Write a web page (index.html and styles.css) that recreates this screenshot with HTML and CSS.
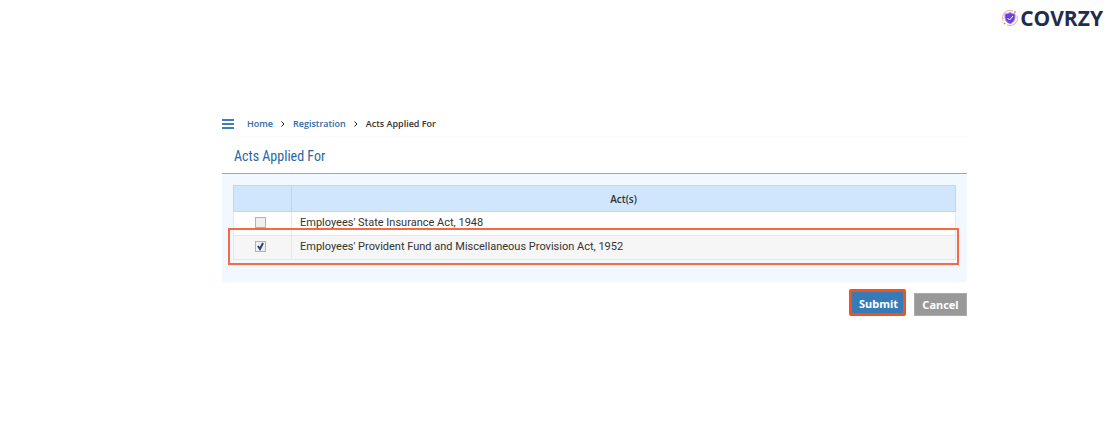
FILE: index.html
```
<!DOCTYPE html>
<html lang="en">
<head>
  <meta charset="UTF-8" />
  <meta name="viewport" content="width=device-width, initial-scale=1.0" />
  <title>Acts Applied For</title>
  <link rel="stylesheet" href="styles.css">
</head>
<body>
  <header class="brand">
    <svg class="brand-icon" viewBox="0 0 36 36" aria-hidden="true">
      <g fill="none" stroke="#f6a58c" stroke-width="2">
        <path d="M4 23A15 15 0 0 1 24 4" />
        <path d="M32 13A15 15 0 0 1 12 32" />
        <path d="M3 14A16 16 0 0 1 13 3M33 22A16 16 0 0 1 23 33" stroke="#f9c9ba" />
      </g>
      <circle cx="28" cy="6" r="2" fill="#f58466" />
      <circle cx="7" cy="29" r="2" fill="#f58466" />
      <path d="M18 7Q23 10 28 10V18Q28 25 18 30Q8 25 8 18V10Q13 10 18 7Z" fill="#6b3fe0" stroke="#a58af0" stroke-width="2" />
      <path d="M13 18L17 22L24 14" fill="none" stroke="#fff" stroke-width="2" />
    </svg>
    <span class="brand-name">COVRZY</span>
  </header>

  <main class="page">
    <nav class="breadcrumb" aria-label="Breadcrumb">
      <button class="menu" type="button" aria-label="Menu">
        <svg viewBox="0 0 12 10" aria-hidden="true"><path d="M0 1H12M0 5H12M0 9H12" stroke="#3f7fbd" stroke-width="2" /></svg>
      </button>
      <a href="#">Home</a>
      <svg class="arrow" viewBox="0 0 4 6" aria-hidden="true"><path d="M0.5 0.5L3 3L0.5 5.5" /></svg>
      <a href="#">Registration</a>
      <svg class="arrow" viewBox="0 0 4 6" aria-hidden="true"><path d="M0.5 0.5L3 3L0.5 5.5" /></svg>
      <span>Acts Applied For</span>
    </nav>

    <form>
      <h1>Acts Applied For</h1>
      <div class="panel">
        <table class="acts">
          <thead>
            <tr><th class="pick"></th><th>Act(s)</th></tr>
          </thead>
          <tbody>
            <tr>
              <td class="pick"><input type="checkbox" id="esi"></td>
              <td><label for="esi">Employees' State Insurance Act, 1948</label></td>
            </tr>
            <tr class="selected">
              <td class="pick"><input type="checkbox" id="epf" checked></td>
              <td><label for="epf">Employees' Provident Fund and Miscellaneous Provision Act, 1952</label></td>
            </tr>
          </tbody>
        </table>
        <div class="highlight"></div>
      </div>
      <div class="actions">
        <button class="btn submit" type="submit">Submit</button>
        <button class="btn cancel" type="button">Cancel</button>
      </div>
    </form>
  </main>
</body>
</html>
```
FILE: styles.css
```
* { box-sizing: border-box; }
body { margin: 0; background: #fff; color: #333; font-family: "Open Sans", "Noto Sans", sans-serif; font-size: 10px; }

.brand { display: flex; justify-content: flex-end; align-items: center; gap: 1px; height: 36px; padding-right: 13px; }
.brand-icon { width: 18px; height: 18px; }
.brand-name { color: #252b4d; font: bold 21px/24px "Open Sans", "Noto Sans", sans-serif; }

.page { margin: 75px 149px 0 222px; }
.breadcrumb { display: flex; align-items: center; height: 26px; gap: 8px; border-bottom: 1px solid #fafafa; font-size: 9px; font-weight: 600; }
.breadcrumb a { color: #2d69a8; text-decoration: none; }
.menu { width: 12px; height: 10px; margin-right: 5px; padding: 0; border: 0; background: none; }
.menu svg { display: block; width: 12px; height: 10px; }
.arrow { width: 4px; height: 6px; fill: none; stroke: #222; stroke-width: 1; }

h1 { height: 37px; margin: 0; padding-left: 12px; border-bottom: 1px solid #82b1d3; color: #2668a0; font: normal 14px/38px "Roboto Condensed", "Open Sans Condensed", Roboto, sans-serif; }

.panel { position: relative; padding: 11px 11px 22px; background: #f1f8ff; }
.acts { width: 100%; border-collapse: collapse; background: #fff; font-size: 11px; }
.acts th, .acts td { height: 24px; padding: 0 8px 2px; border: 1px solid #e3e8ec; line-height: 16px; text-align: left; }
.acts td { font-family: Roboto, "Noto Sans", sans-serif; }
.acts th { height: 26px; padding-bottom: 0; background: #cfe6fd; border-color: #c3d6e6; font-size: 10px; font-weight: 600; text-align: center; }
.acts .pick { width: 58px; padding: 0 4px 2px 0; text-align: center; }
.acts .selected { background: #f6f6f6; }
.acts input { appearance: none; display: block; width: 11px; height: 11px; margin: 0 auto; border: 1px solid #adb3b8; background: #f0f0f0; }
.acts input:checked { background: #f0f0f0 url("data:image/svg+xml,%3Csvg xmlns='http://www.w3.org/2000/svg' viewBox='0 0 9 9'%3E%3Cpath d='M2 4L4 7L7 1' fill='none' stroke='%23274679' stroke-width='2'/%3E%3C/svg%3E") center / 9px 9px no-repeat; }
.highlight { position: absolute; left: 6px; right: 8px; bottom: 17px; height: 37px; border: 2px solid #f9683f; }

.actions { display: flex; justify-content: flex-end; align-items: flex-end; gap: 8px; padding-top: 7px; }
.btn { height: 23px; padding: 0; border: 1px solid #aaa; color: #fff; font: bold 11px/20px "Noto Sans", "Open Sans", sans-serif; }
.submit { width: 57px; height: 27px; padding: 2px 0 0 2px; border: 3px solid #f4511e; border-radius: 2px; background: #347bb8; }
.cancel { width: 53px; background: #999; }
```
